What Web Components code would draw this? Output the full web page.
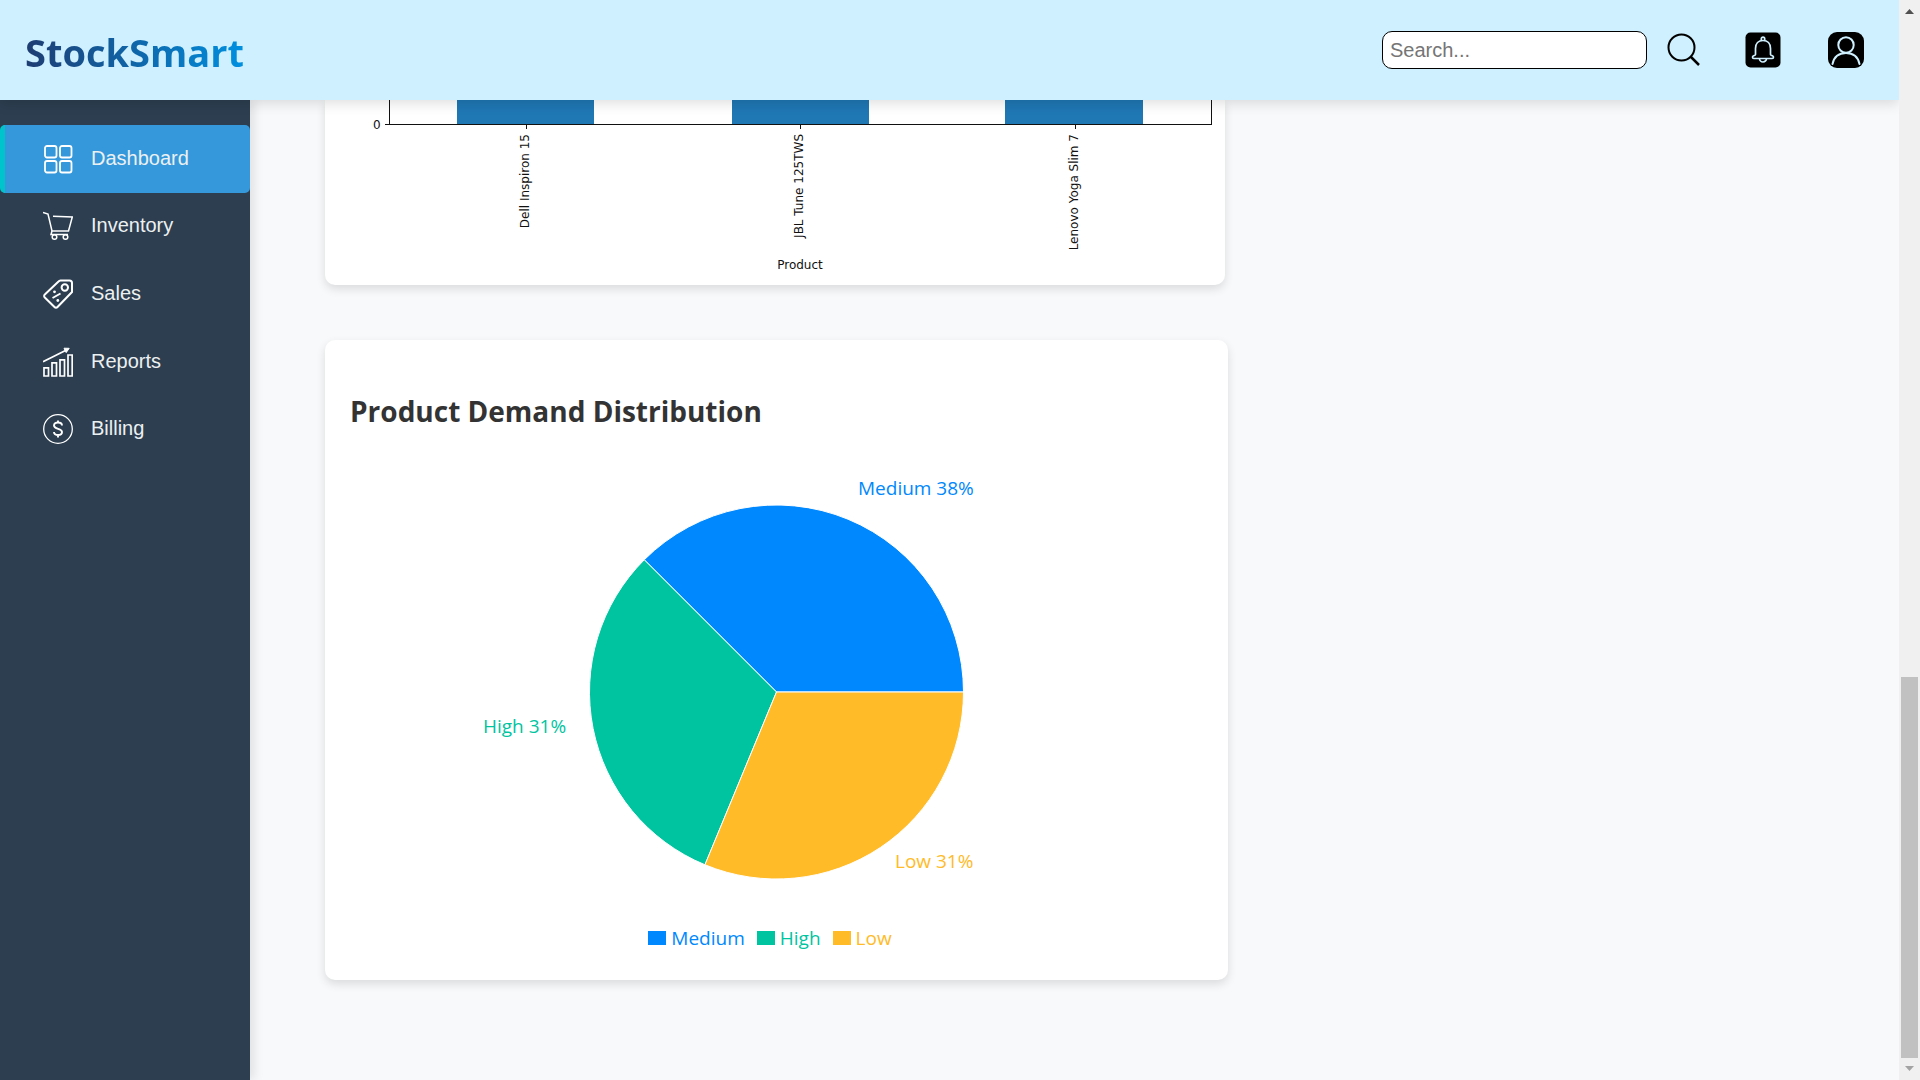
<!DOCTYPE html>
<html lang="en">
<head>
<meta charset="utf-8">
<title>StockSmart</title>
<style>
html, body { margin: 0; height: 100%; }
body { background: #f8f9fb; font-family: "Open Sans", sans-serif; color: #333; overflow: hidden; }
</style>
</head>
<body>
<stock-app>
  <stock-header slot="header"></stock-header>
  <stock-nav slot="nav">
    <nav-item active label="Dashboard" icon="dashboard"></nav-item>
    <nav-item label="Inventory" icon="inventory"></nav-item>
    <nav-item label="Sales" icon="sales"></nav-item>
    <nav-item label="Reports" icon="reports"></nav-item>
    <nav-item label="Billing" icon="billing"></nav-item>
  </stock-nav>
  <chart-card continued><bar-chart></bar-chart></chart-card>
  <chart-card wide>
    <h2 slot="title">Product Demand Distribution</h2>
    <demand-pie></demand-pie>
  </chart-card>
  <scroll-track slot="scroll"></scroll-track>
</stock-app>

<script>
function define(name, html) {
  customElements.define(name, class extends HTMLElement {
    connectedCallback() {
      if (this.shadowRoot) return;
      const t = document.createElement('template');
      t.innerHTML = typeof html === 'function' ? html(this) : html;
      this.attachShadow({ mode: 'open' }).append(t.content.cloneNode(true));
    }
  });
}

define('stock-app', `
<style>
:host { display: grid; grid-template: 100px 1fr / 250px 1fr 21px; height: 100vh; overflow: hidden; }
slot[name=header]::slotted(*) { grid-column: 1 / 3; z-index: 3; }
slot[name=nav]::slotted(*) { grid-column: 1; grid-row: 2; z-index: 2; }
slot[name=scroll]::slotted(*) { grid-column: 3; grid-row: 1 / 3; z-index: 4; }
main { grid-column: 2; grid-row: 2; display: flex; flex-direction: column; align-items: flex-start; gap: 55px; padding: 0 75px; overflow: hidden; min-height: 0; }
</style>
<slot name="header"></slot>
<slot name="nav"></slot>
<main><slot></slot></main>
<slot name="scroll"></slot>`);

define('stock-header', `
<style>
:host { display: flex; align-items: center; box-sizing: border-box; padding: 0 35px 0 25px; background: #cef0ff; box-shadow: 0 4px 12px rgba(0,0,0,.12); }
.logo { margin-right: auto; padding-top: 3px; font-size: 38px; line-height: 56px; font-weight: 700; text-decoration: none; color: transparent; background: linear-gradient(90deg, #1e3c72, #0090e0); -webkit-background-clip: text; background-clip: text; }
form { display: flex; align-items: center; gap: 20px; margin: 0 44px 0 0; }
input { box-sizing: border-box; width: 265px; height: 38px; padding: 0 7px; border: 1px solid #000; border-radius: 10px; background: #fff; font: 20px "Liberation Sans", sans-serif; }
input::placeholder { color: #757575; opacity: 1; }
button { display: block; padding: 0; border: 0; background: none; }
svg { display: block; }
.actions { display: flex; gap: 47px; }
</style>
<a class="logo" href="#">StockSmart</a>
<form role="search">
  <input type="search" placeholder="Search..." aria-label="Search">
  <button type="button" aria-label="Search"><svg width="34" height="34" viewBox="0 0 34 34" fill="none" stroke="#000" stroke-width="2"><circle cx="14.500" cy="14.500" r="13"/><path d="M23.500 23.500 32 32" stroke-width="2.500"/></svg></button>
</form>
<div class="actions">
  <button type="button" aria-label="Notifications"><svg width="36" height="36" viewBox="0 0 36 36" fill="none" stroke="#cef0ff" stroke-width="1.700"><rect x=".5" y=".5" width="35" height="35" rx="5" fill="#000" stroke="none"/><path d="M10.500 22.500V16.500C10.500 11.500 13.500 8.500 18 8.500s7.500 3 7.500 8v6c0 1 3 1.200 3 2.600 0 .9-.5 1.400-1.300 1.400H8.800c-.8 0-1.300-.5-1.300-1.400 0-1.400 3-1.600 3-2.600Z"/><path d="M16.300 8.700V6.800a1.700 1.700 0 0 1 3.400 0V8.700M14.500 26.500a3.500 3.500 0 0 0 7 0"/></svg></button>
  <button type="button" aria-label="Account"><svg width="36" height="36" viewBox="0 0 36 36" fill="none" stroke="#cef0ff" stroke-width="2"><rect width="36" height="36" rx="9" fill="#000" stroke="none"/><circle cx="18" cy="13" r="7.700"/><path d="M4.500 32C6 25 11 21 18 21s12 4 13.500 11" stroke-linecap="round"/></svg></button>
</div>`);

define('stock-nav', `
<style>
:host { display: block; padding-top: 25px; background: #2c3e50; box-shadow: 4px 0 10px rgba(0,0,0,.1); }
nav { display: grid; grid-auto-rows: 1fr; height: 338px; }
</style>
<nav><slot></slot></nav>`);

const icons = {
  dashboard: '<g stroke-width="1.800"><rect x="2" y="2" width="11.500" height="11.500" rx="2"/><rect x="17" y="2" width="11.500" height="11.500" rx="2"/><rect x="2" y="17" width="11.500" height="11.500" rx="2"/><rect x="17" y="17" width="11.500" height="11.500" rx="2"/></g>',
  inventory: '<g stroke-width="1.500"><path d="M0 1.500l5 1.500L9 20h16.500L29.300 6 10 5.300M9 20l-1 3.500h17"/><circle cx="11.500" cy="26" r="2.300"/><circle cx="22.500" cy="26" r="2.300"/></g>',
  sales: '<g stroke-width="2"><path d="M17.500 1.500H26.500a2.500 2.500 0 0 1 2.500 2.500v9L14.500 28a2 2 0 0 1-3 0L1.800 18.500a2 2 0 0 1 0-3L15.500 2.500a3 3 0 0 1 2-1Z"/><circle cx="21.800" cy="8.500" r="3.200"/><path d="M9.500 19l8-4.500"/></g><g fill="#fff" stroke="none"><circle cx="11.500" cy="12.800" r="1.400"/><circle cx="14.800" cy="21.500" r="1.400"/></g>',
  reports: '<g stroke-width="1.700"><path d="M1 20.800h4.500V29H1ZM9 15.800h4.500V29H9ZM17 12.800h4.500V29H17ZM25 8h4.200v21H25Z"/><path d="M0 14.800 24.500 2.500"/><path d="M21 1.200l5.200.1-3 4.300Z" fill="#fff" stroke-width="1"/></g>',
  billing: '<circle cx="15" cy="15" r="14.300" stroke-width="1.300"/><path d="M19 11.500c0-2-1.500-3-4-3s-4 1-4 3c0 4.200 8 2.500 8 6.500 0 2-1.500 3-4 3s-4-1-4-3M15 6.500v2M15 21v2.500" stroke-width="1.900"/>'
};
define('nav-item', el => `
<style>
:host { display: grid; }
a { display: flex; align-items: center; gap: 18px; padding: 0 38px; border-left: 5px solid transparent; border-radius: 5px; color: #ecf0f1; text-decoration: none; font: 20px/24px "Liberation Sans", sans-serif; }
:host([active]) a { background: #3498db; border-left-color: #00c4cc; }
svg { flex: none; }
span { padding-bottom: 2px; }
</style>
<a href="#"><svg width="30" height="30" viewBox="0 0 30 30" fill="none" stroke="#fff">${icons[el.getAttribute('icon')]}</svg><span>${el.getAttribute('label')}</span></a>`);

define('chart-card', `
<style>
:host { display: block; box-sizing: border-box; flex: none; width: 100%; max-width: 900px; border-radius: 10px; background: #fff; box-shadow: 0 4px 10px rgba(0,0,0,.12); }
:host([continued]) { border-radius: 0 0 10px 10px; }
:host([wide]) { max-width: 903px; padding: 50px 25px 28px; }
::slotted(h2) { margin: 0; font-size: 28px; line-height: 42px; font-weight: 700; color: #333; }
</style>
<slot name="title"></slot><slot></slot>`);

define('bar-chart', () => {
  const bars = [[132, 137, 'Dell Inspiron 15'], [407, 137, 'JBL Tune 125TWS'], [680, 138, 'Lenovo Yoga Slim 7']];
  const ticks = [201, 475, 750];
  return `
<style>
:host { display: block; }
svg { display: block; width: 100%; }
text { font: 12px "DejaVu Sans", sans-serif; fill: #111; }
</style>
<svg viewBox="0 0 900 185" role="img" aria-label="Product bar chart">
  ${bars.map((b, i) => `<rect x="${b[0]}" width="${b[1]}" height="24" fill="#1f77b4"/>
  <path d="M${ticks[i] + .5} 24v5" stroke="#111"/>
  <text transform="translate(${ticks[i] + 3} 34) rotate(-90)" text-anchor="end">${b[2]}</text>`).join('')}
  <path d="M64.500 0V24.500M60 24.500H887M886.500 0V24.500" stroke="#111" fill="none"/>
  <text x="48" y="29">0</text>
  <text x="475" y="169" text-anchor="middle">Product</text>
</svg>`;
});

define('demand-pie', () => {
  const cx = 426.5, cy = 211, r = 187;
  const pt = d => { const a = d * Math.PI / 180; return (cx + r * Math.cos(a)) + ' ' + (cy - r * Math.sin(a)); };
  const parts = [['Medium', 38, 0, 135, '#0088fe', 508, 14], ['High', 31, 135, 247.5, '#00c49f', 133, 252], ['Low', 31, 247.5, 360, '#ffbb28', 545, 387]];
  return `
<style>
:host { display: block; font-size: 19px; line-height: 28px; }
svg { display: block; width: 100%; padding-top: 49px; }
ul { display: flex; justify-content: center; gap: 12px; margin: 0; padding: 0 13px 0 0; list-style: none; }
li { display: flex; align-items: center; gap: 5px; }
i { width: 18px; height: 14px; background: currentColor; }
</style>
<svg viewBox="0 0 853 443" role="img" aria-label="Product demand distribution">
  ${parts.map(p => `<path d="M${cx} ${cy}L${pt(p[2])}A${r} ${r} 0 0 0 ${pt(p[3])}Z" fill="${p[4]}" stroke="#fff"/>
  <text x="${p[5]}" y="${p[6]}" fill="${p[4]}">${p[0]} ${p[1]}%</text>`).join('')}
</svg>
<ul>${parts.map(p => `<li style="color:${p[4]}"><i></i>${p[0]}</li>`).join('')}</ul>`;
});

define('scroll-track', `
<style>
:host { display: flex; flex-direction: column; align-items: center; background: #f0f0f0; }
.space { flex: 660; }
.thumb { flex: 381; width: 17px; background: #c1c1c1; }
svg { flex: none; display: block; }
</style>
<svg width="21" height="17" viewBox="0 0 21 17"><path d="M6 14h9l-4.500-5Z" fill="#505050"/></svg>
<div class="space"></div>
<div class="thumb"></div>
<svg width="21" height="22" viewBox="0 0 21 22"><path d="M6 8h9l-4.500 5Z" fill="#a3a3a3"/></svg>`);
</script>
</body>
</html>
